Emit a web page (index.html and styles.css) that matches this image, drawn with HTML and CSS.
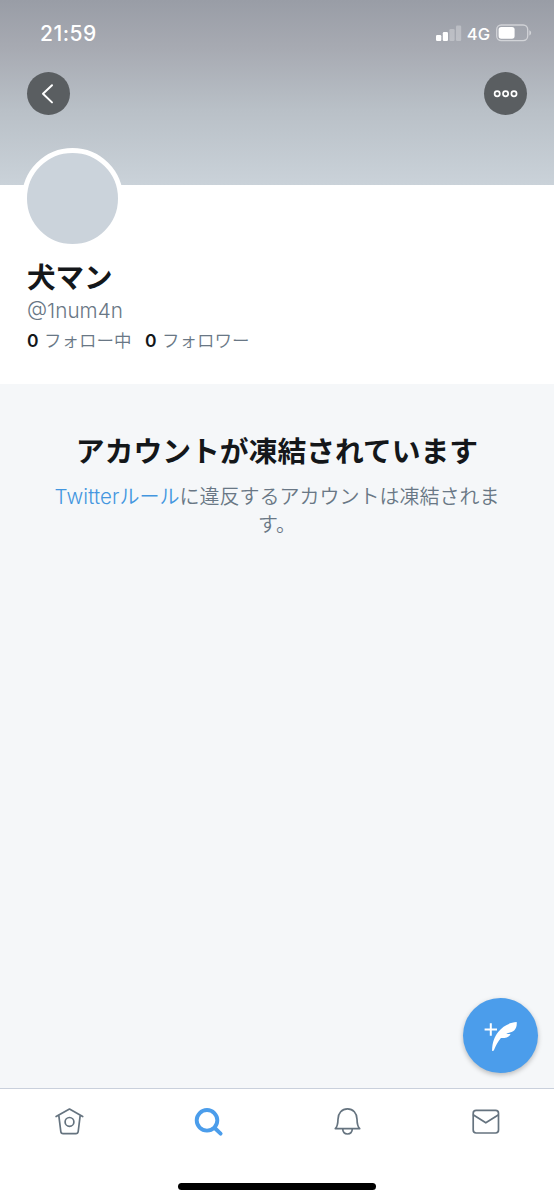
FILE: index.html
```html
<!DOCTYPE html>
<html lang="ja">
<head>
<meta charset="utf-8">
<title>犬マン</title>
<link rel="stylesheet" href="styles.css">
</head>
<body>
<div class="screen">
  <header class="cover">
    <div class="status">
      <span class="time">21:59</span>
      <div class="indicators">
        <svg class="signal" width="26" height="17" viewBox="0 0 26 17" fill="#fff">
          <rect x="0" y="10" width="5.3" height="6" rx="1.2"/>
          <rect x="6.8" y="7" width="5.2" height="9" rx="1.2"/>
          <rect x="13.4" y="4" width="5.2" height="12" rx="1.2" opacity=".28"/>
          <rect x="20" y="0.5" width="5.2" height="15.5" rx="1.2" opacity=".28"/>
        </svg>
        <span class="network">4G</span>
        <svg class="battery" width="36" height="18" viewBox="0 0 36 18">
          <rect x=".7" y="1" width="31" height="15.6" rx="4.5" fill="none" stroke="#fff" stroke-opacity=".5" stroke-width="1.3"/>
          <rect x="2.6" y="2.9" width="16" height="11.8" rx="2.6" fill="#fff"/>
          <path d="M33.3 6.2c2.4.8 2.4 4.4 0 5.2z" fill="#fff" fill-opacity=".5"/>
        </svg>
      </div>
    </div>
    <div class="actions">
      <button class="round" aria-label="戻る">
        <svg width="43" height="43" viewBox="0 0 43 43" fill="none" stroke="#fff" stroke-width="2" stroke-linecap="round" stroke-linejoin="round"><path d="M25 13.2 16 21.8l9 8.6"/></svg>
      </button>
      <button class="round" aria-label="その他">
        <svg width="43" height="43" viewBox="0 0 43 43" fill="none" stroke="#fff" stroke-width="1.7"><circle cx="13.2" cy="21.8" r="2.6"/><circle cx="21.6" cy="21.8" r="2.6"/><circle cx="30" cy="21.8" r="2.6"/></svg>
      </button>
    </div>
  </header>
  <section class="profile">
    <div class="avatar"></div>
    <h1 class="name">犬マン</h1>
    <p class="handle">@1num4n</p>
    <p class="stats"><b>0</b><span class="label following">フォロー中</span><b>0</b><span class="label">フォロワー</span></p>
  </section>
  <main class="notice">
    <h2 class="notice-title">アカウントが凍結されています</h2>
    <p class="notice-text"><a class="link"><span class="brand">Twitter</span>ルール</a>に違反するアカウントは凍結されます。</p>
    <button class="compose" aria-label="ツイートする">
      <svg width="75" height="75" viewBox="0 0 75 75"><path d="M27.8 25.300v12.400M21.600 31.500H34" stroke="#fff" stroke-width="2" fill="none"/><path d="M29.100 52.400C29.200 44.500 31.500 38.800 35.200 34.100 40 28 46 24.600 53.700 24.100c.3 3.400-.4 6.300-2.300 8.100-2 1.800-4.700 2.400-8.200 3.500 1.600.5 2.900.5 4.400.2-1.500 3.200-5 4.400-9.700 4.200-2.900 3.500-5.300 7.800-7 12.200-.4 1-1.800 1-1.800.1z" fill="#fff"/></svg>
    </button>
  </main>
  <footer class="dock">
    <nav class="tabs">
      <svg class="tab" width="32" height="32" viewBox="0 0 32 32"><path d="M3.100 11.500 16.500 4l13.200 7.500M5.800 10.300l2 16.200c.1 1.400 1 2.200 2.300 2.200h12.800c1.300 0 2.100-.8 2.300-2.200l2-16.200"/><circle cx="16.500" cy="16.900" r="4.400"/></svg>
      <svg class="tab active" width="32" height="32" viewBox="0 0 32 32"><circle cx="15" cy="15.300" r="10.300"/><path d="m22.700 23 5.900 5.600"/></svg>
      <svg class="tab" width="32" height="32" viewBox="0 0 32 32"><path d="M4.300 23.600c2.500-2.300 2.600-4.900 2.700-9.400.1-6.200 3.900-10.300 9.500-10.300s9.400 4.100 9.500 10.300c.1 4.500.2 7.100 2.700 9.400zM11.700 23.800c.1 3 2 5.200 4.800 5.200s4.700-2.200 4.800-5.200"/></svg>
      <svg class="tab" width="32" height="32" viewBox="0 0 32 32"><rect x="3.200" y="5.400" width="25.300" height="22.600" rx="2.900"/><path d="m3.500 10 12.300 7.800L28.200 10"/></svg>
    </nav>
    <div class="home-bar"></div>
  </footer>
</div>
</body>
</html>
```
FILE: styles.css
```css
* { box-sizing: border-box; }
body, h1, h2, p { margin: 0; }
button { border: 0; padding: 0; font: inherit; }
svg { display: block; }
body { font-family: Inter, "Noto Sans CJK JP", sans-serif; color: #14171a; background: #fff; }
.screen { width: 554px; height: 1200px; display: flex; flex-direction: column; overflow: hidden; }
.cover { height: 185px; flex: none; background: linear-gradient(#999da6 0, #a7aab2 48px, #b9c0c7 110px, #cad2d9 185px); }
.status { height: 72px; padding: 21px 22px 0 40px; display: flex; justify-content: space-between; align-items: flex-start; color: #fff; }
.time { font-size: 21px; line-height: 25px; font-weight: 550; letter-spacing: .5px; }
.indicators { display: flex; align-items: center; height: 24px; }
.network { font-size: 16.5px; font-weight: 450; margin: 1px 6px 0 5px; line-height: 24px; }
.actions { display: flex; justify-content: space-between; padding: 0 27px; }
.round { width: 43px; height: 43px; border-radius: 50%; background: #5a5e61; }
.profile { height: 199px; flex: none; padding: 0 27px; background: #fff; }
.avatar { width: 101px; height: 101px; margin: -37px 0 0 -5px; border: 5px solid #fff; border-radius: 50%; background: #cbd3db; position: relative; }
.name { font-size: 28.5px; line-height: 38px; margin-top: 10px; font-weight: 700; }
.handle { font-size: 20.7px; line-height: 28px; font-weight: 350; color: #697785; }
.stats { font-size: 17.5px; line-height: 26px; margin-top: 3px; display: flex; }
.stats b { font-weight: 600; width: 17px; }
.label { color: #697785; font-weight: 350; }
.following { width: 101px; }
.notice { flex: 1; background: #f5f7f9; padding: 47px 50px 0; text-align: center; position: relative; }
.notice-title { font-size: 28.8px; line-height: 42px; font-weight: 700; margin: 0 -20px; white-space: nowrap; }
.notice-text { font-size: 20px; line-height: 28px; margin-top: 10px; font-weight: 350; color: #697785; }
.link { color: #4396df; }
.brand { font-size: 20.5px; letter-spacing: .1px; }
.compose { position: absolute; right: 16px; bottom: 15px; width: 75px; height: 75px; border-radius: 50%; background: #4b9deb; box-shadow: 0 2px 5px rgba(0,0,0,.25); }
.dock { height: 112px; flex: none; border-top: 1px solid #c9d0dc; background: #fff; display: flex; flex-direction: column; align-items: center; }
.tabs { align-self: stretch; display: flex; justify-content: space-between; padding: 16px 52px 0 53px; height: 93.5px; }
.tab { fill: none; stroke: #65737f; stroke-width: 1.7; stroke-linejoin: round; stroke-linecap: round; }
.active { stroke: #4b9deb; stroke-width: 3.9; }
.home-bar { width: 198px; height: 7px; border-radius: 4px; background: #000; }
```
